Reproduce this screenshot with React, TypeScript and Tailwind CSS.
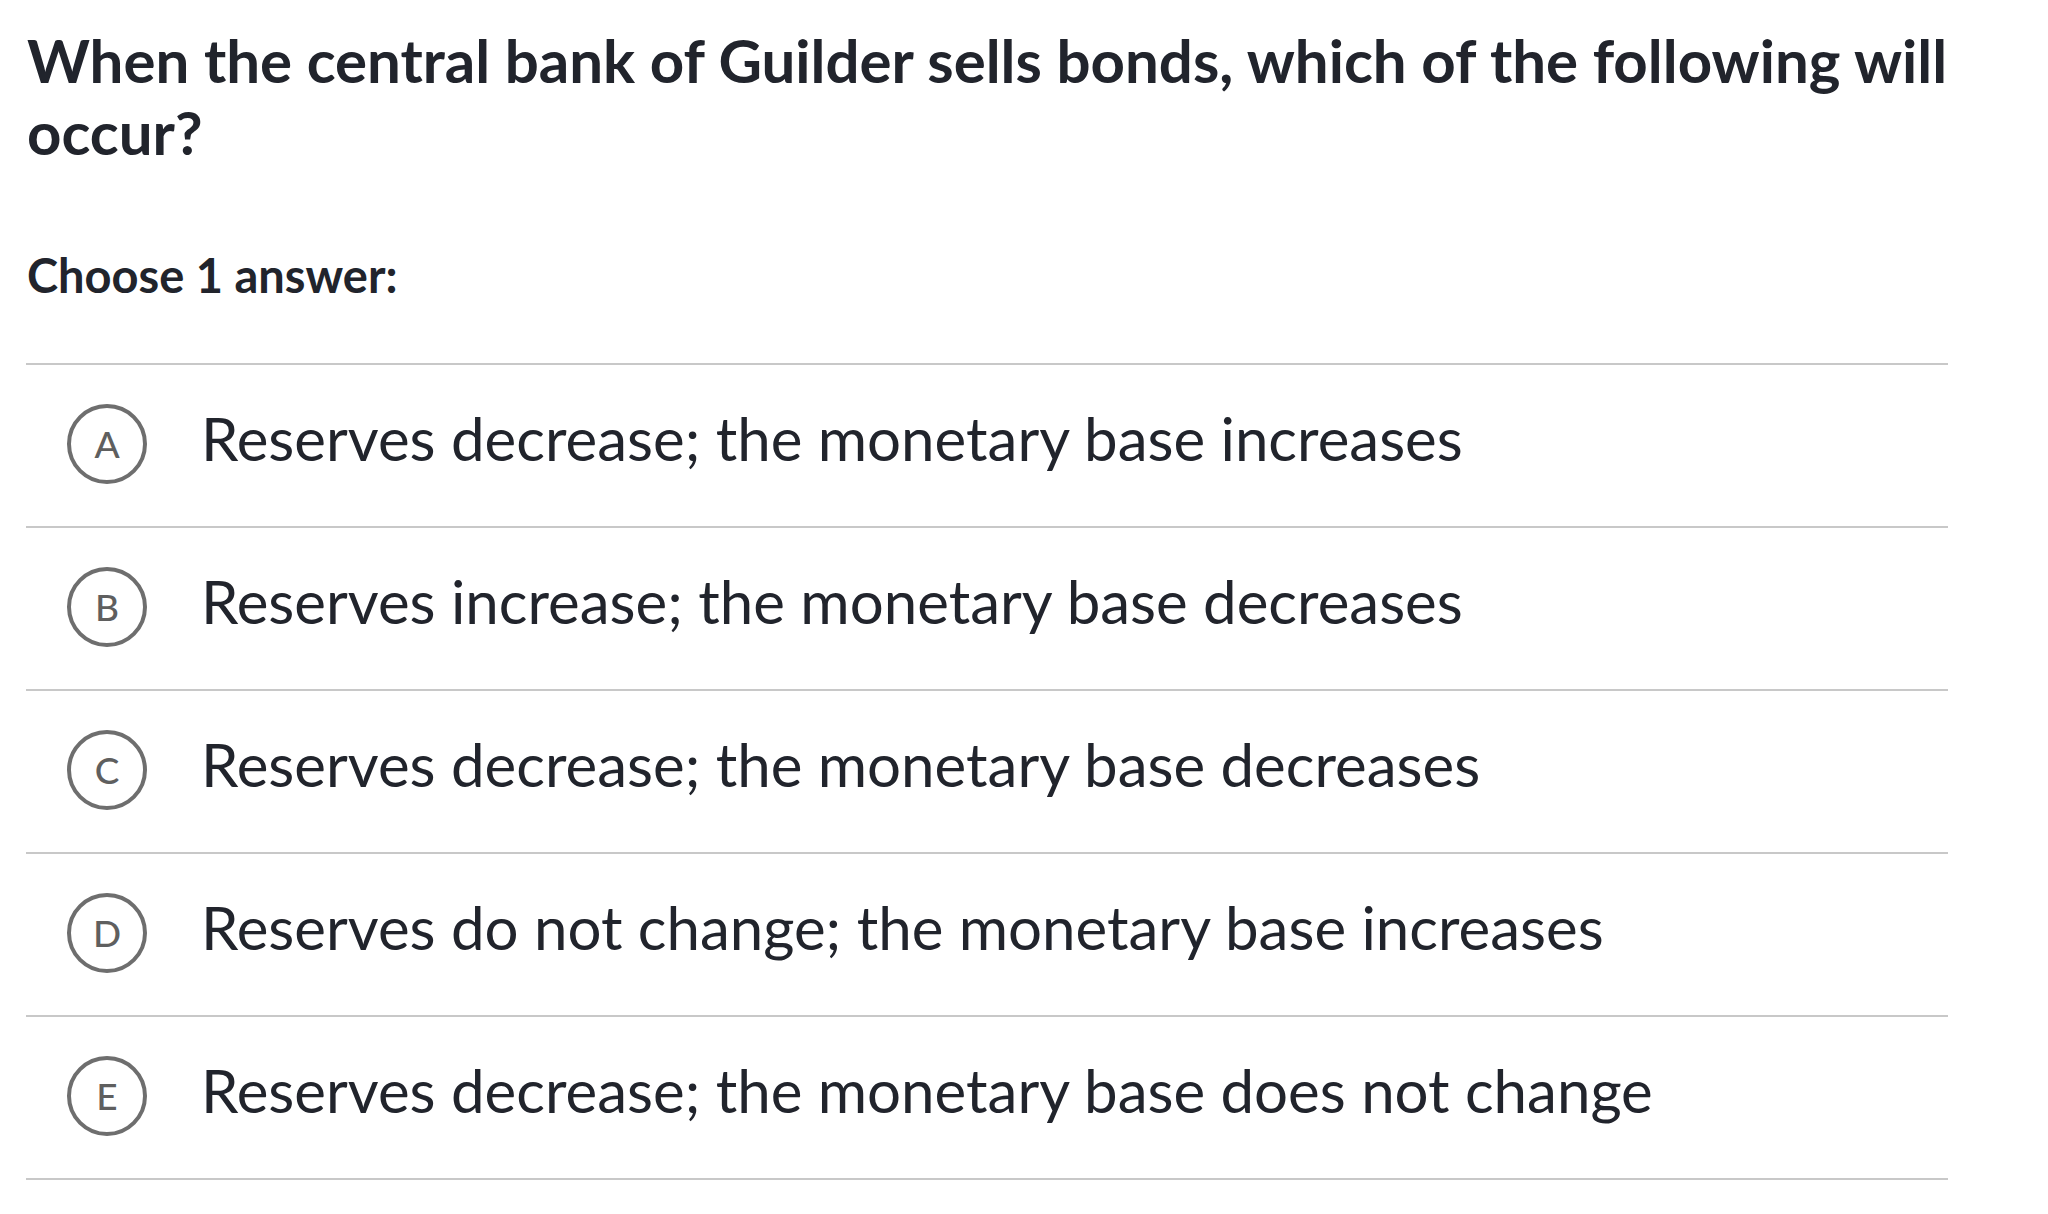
import React from "react";

const options = [
  { letter: "A", text: "Reserves decrease; the monetary base increases" },
  { letter: "B", text: "Reserves increase; the monetary base decreases" },
  { letter: "C", text: "Reserves decrease; the monetary base decreases" },
  { letter: "D", text: "Reserves do not change; the monetary base increases" },
  { letter: "E", text: "Reserves decrease; the monetary base does not change" },
];

export default function App() {
  return (
    <div
      className="min-h-screen w-full bg-white pl-[26px] pt-[24px] text-[#21242c]"
      style={{ fontFamily: "Lato, 'Noto Sans', sans-serif" }}
    >
      <h1 className="w-[2000px] pl-[1px] text-[60px] font-bold leading-[72px]">
        When the central bank of Guilder sells bonds, which of the following will occur?
      </h1>
      <div className="w-[1922px]">
        <p className="mt-[79px] pl-[1px] text-[47px] font-bold leading-[56px]">Choose 1 answer:</p>
        <div className="mt-[60px] border-b-2 border-[#c8c8c8]">
          {options.map((o) => (
            <div
              key={o.letter}
              className="flex h-[163px] items-center border-t-2 border-[#c8c8c8]"
            >
              <div className="mb-[4px] ml-[41px] flex h-[80px] w-[80px] shrink-0 items-center justify-center rounded-full border-[4px] border-[#6e6e6e] text-[37px] font-medium leading-none text-[#5f5f5f]">
                {o.letter}
              </div>
              <div className="mb-[16px] ml-[54px] text-[60px] leading-[72px] text-[#21242c]">{o.text}</div>
            </div>
          ))}
        </div>
      </div>
    </div>
  );
}
